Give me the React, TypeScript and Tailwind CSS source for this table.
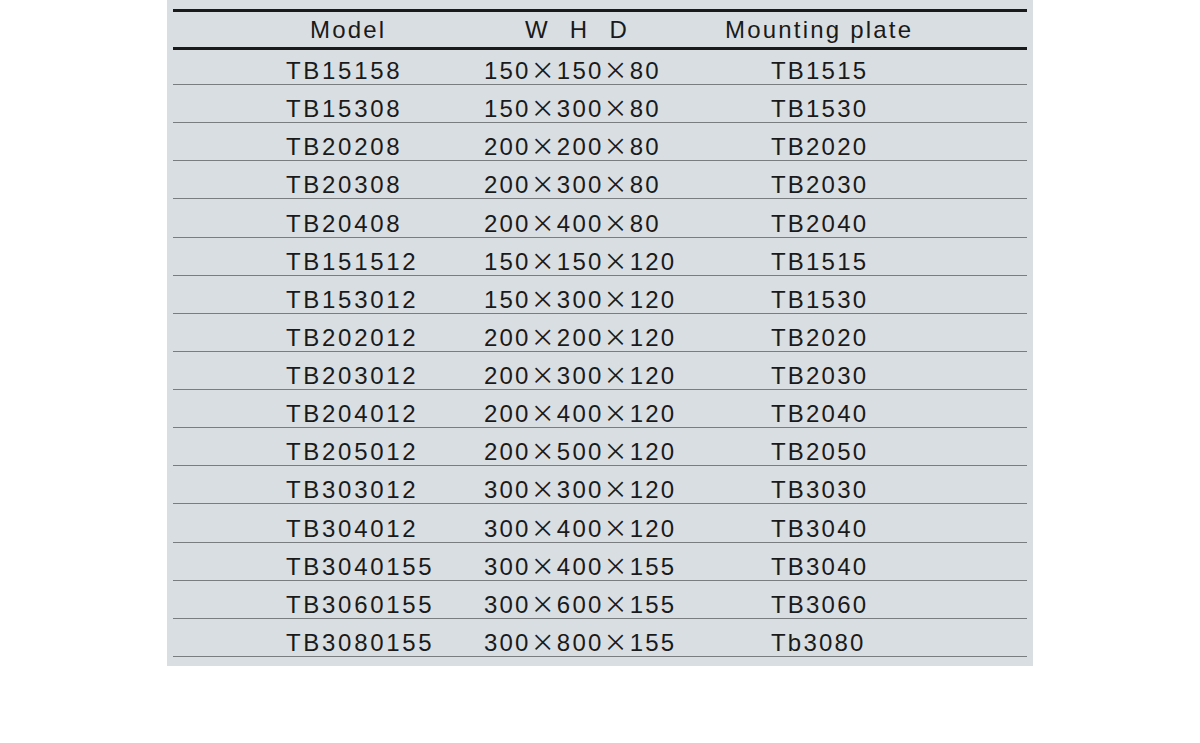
import React from 'react';

const ROWS: [string, [number, number, number], string][] = [
  ['TB15158', [150, 150, 80], 'TB1515'],
  ['TB15308', [150, 300, 80], 'TB1530'],
  ['TB20208', [200, 200, 80], 'TB2020'],
  ['TB20308', [200, 300, 80], 'TB2030'],
  ['TB20408', [200, 400, 80], 'TB2040'],
  ['TB151512', [150, 150, 120], 'TB1515'],
  ['TB153012', [150, 300, 120], 'TB1530'],
  ['TB202012', [200, 200, 120], 'TB2020'],
  ['TB203012', [200, 300, 120], 'TB2030'],
  ['TB204012', [200, 400, 120], 'TB2040'],
  ['TB205012', [200, 500, 120], 'TB2050'],
  ['TB303012', [300, 300, 120], 'TB3030'],
  ['TB304012', [300, 400, 120], 'TB3040'],
  ['TB3040155', [300, 400, 155], 'TB3040'],
  ['TB3060155', [300, 600, 155], 'TB3060'],
  ['TB3080155', [300, 800, 155], 'Tb3080'],
];

function Times() {
  return <span className="font-['Noto_Sans_CJK_SC',sans-serif]">×</span>;
}

export default function App() {
  return (
    <div className="min-h-screen bg-white font-['Liberation_Sans',Arial,sans-serif] text-[24px] leading-6 tracking-[2.2px] text-[#1a1a1a]">
      <div className="ml-[167px] w-[866px] bg-[#d9dee3] px-[6px] pt-[9px] pb-[9px]">
        {/* Header */}
        <div className="grid h-[41px] grid-cols-[311px_287px_1fr] items-start border-y-[3px] border-[#1a1a1a] pt-[6px]">
          <div className="pl-[137px]">Model</div>
          <div className="flex gap-[20px] pl-[41px]">
            <span>W</span>
            <span>H</span>
            <span>D</span>
          </div>
          <div className="-ml-[46px]">Mounting plate</div>
        </div>

        {/* Rows */}
        {ROWS.map(([model, [w, h, d], plate], i) => (
          <div
            key={model}
            className={`grid grid-cols-[311px_287px_1fr] items-end border-b border-[#7a7d80] pb-[1px] ${
              i === 0 ? 'h-[35px]' : 'h-[38.13px]'
            }`}
          >
            <div className="pl-[113px] tracking-[2.7px]">{model}</div>
            <div>
              {w}
              <Times />
              {h}
              <Times />
              {d}
            </div>
            <div>{plate}</div>
          </div>
        ))}
      </div>
    </div>
  );
}
